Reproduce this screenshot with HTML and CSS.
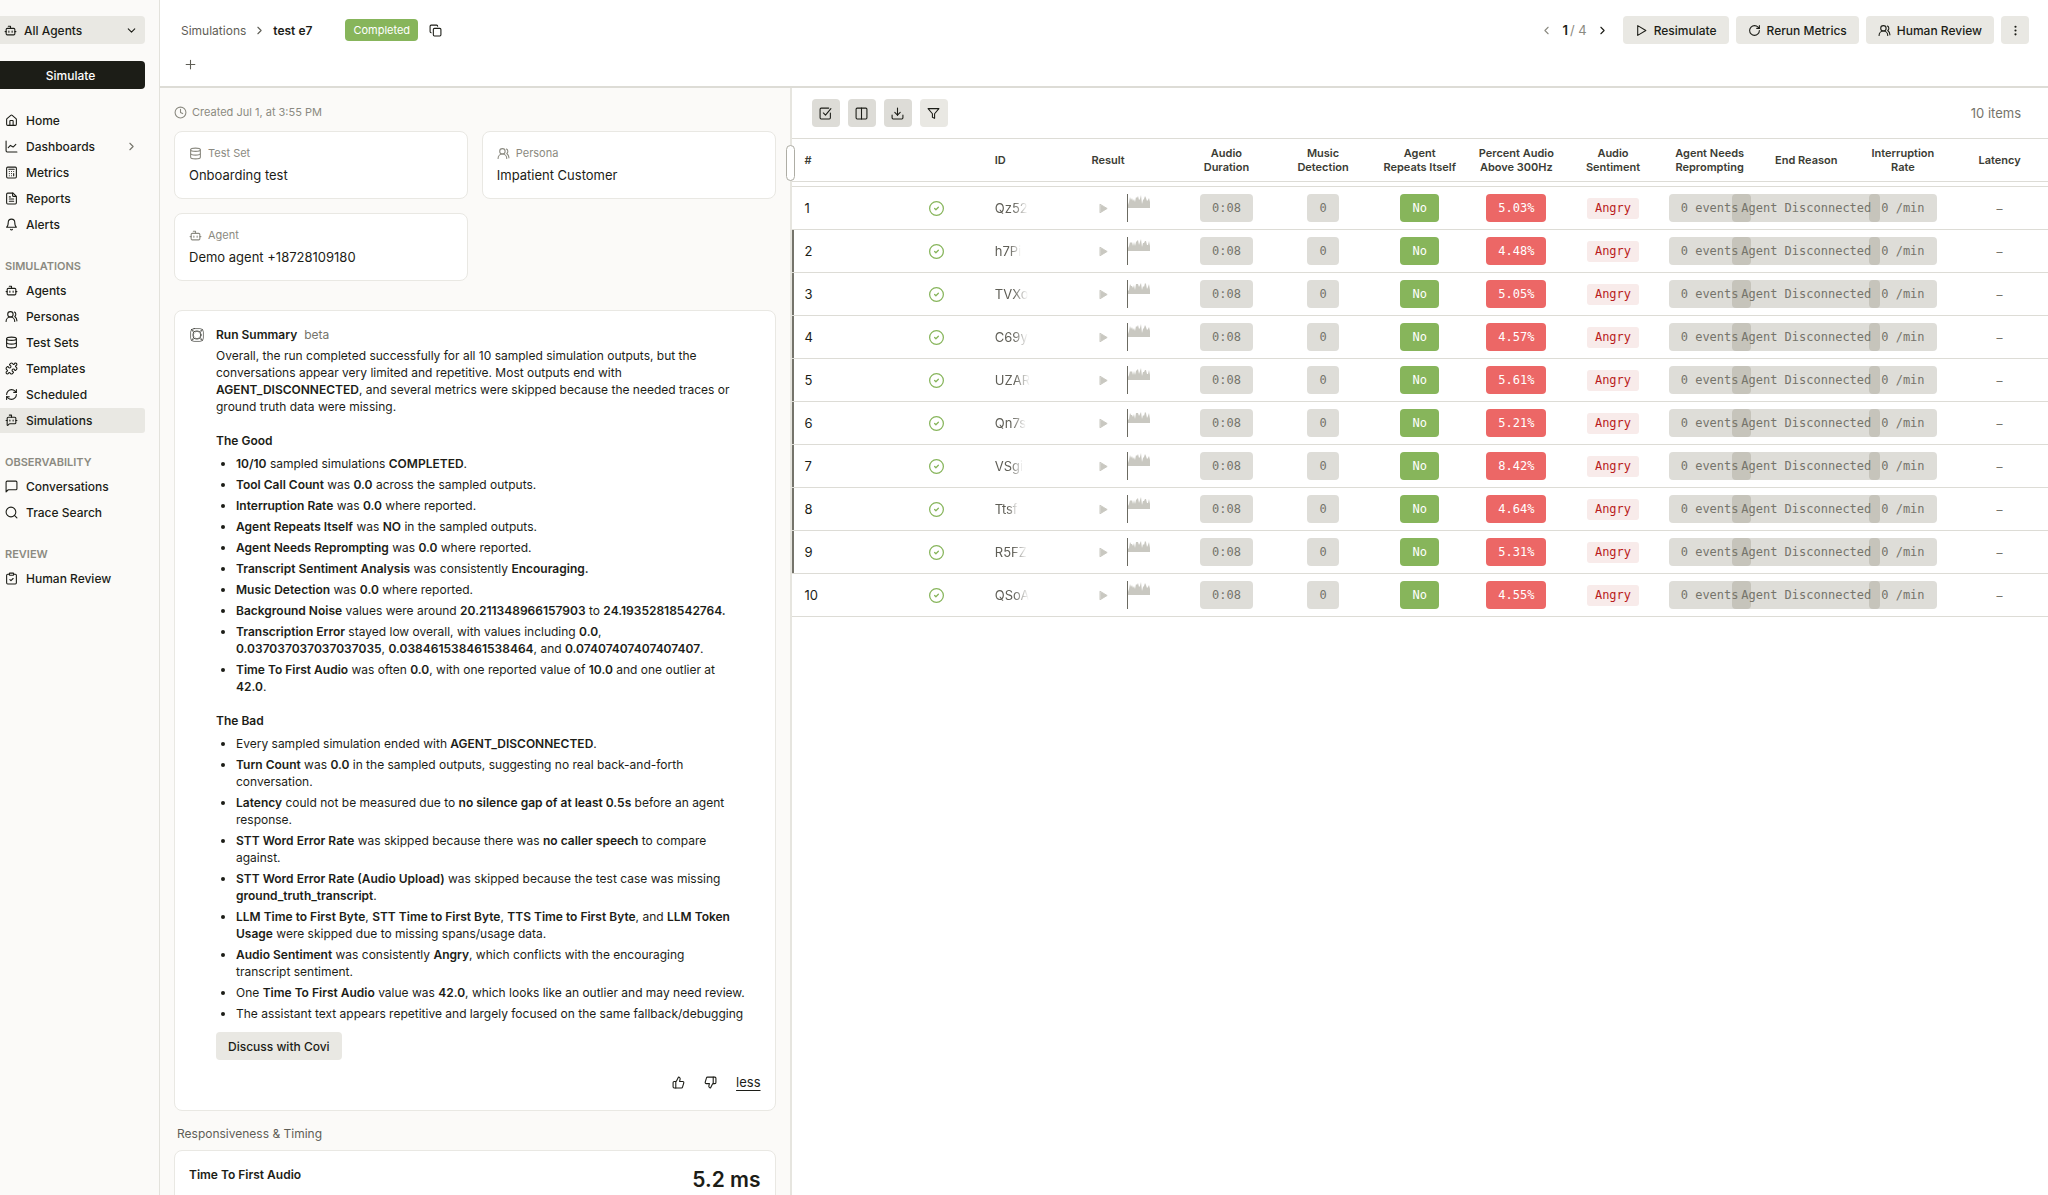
FILE: index.html
```html
<!DOCTYPE html>
<html lang="en">
<head>
    <meta charset="UTF-8">
    <meta name="viewport" content="width=device-width, initial-scale=1.0">
    <title>test e7 - Simulations</title>
    <link rel="stylesheet" href="styles.css">
</head>
<body>

<!-- Icon sprite -->
<svg class="sprite" aria-hidden="true">
    <symbol id="i-bot" viewBox="0 0 24 24"><path d="M12 8V4H8"/><rect width="16" height="12" x="4" y="8" rx="2"/><path d="M2 14h2M20 14h2M15 13v2M9 13v2"/></symbol>
    <symbol id="i-down" viewBox="0 0 24 24"><path d="m6 9 6 6 6-6"/></symbol>
    <symbol id="i-right" viewBox="0 0 24 24"><path d="m9 18 6-6-6-6"/></symbol>
    <symbol id="i-left" viewBox="0 0 24 24"><path d="m15 18-6-6 6-6"/></symbol>
    <symbol id="i-home" viewBox="0 0 24 24"><path d="M15 21v-8a1 1 0 0 0-1-1h-4a1 1 0 0 0-1 1v8"/><path d="M3 10a2 2 0 0 1 .709-1.528l7-5.999a2 2 0 0 1 2.582 0l7 5.999A2 2 0 0 1 21 10v9a2 2 0 0 1-2 2H5a2 2 0 0 1-2-2z"/></symbol>
    <symbol id="i-chart" viewBox="0 0 24 24"><path d="M2 2v18a2 2 0 0 0 2 2h18"/><path d="M6 14l4-4 5 3 5-5"/></symbol>
    <symbol id="i-calc" viewBox="0 0 24 24"><rect width="18" height="20" x="3" y="2" rx="2"/><path d="M7 6h10M16 10h.01M12 10h.01M8 10h.01M12 14h.01M8 14h.01M16 14v4M12 18h.01M8 18h.01"/></symbol>
    <symbol id="i-file" viewBox="0 0 24 24"><path d="M15 2H5a2 2 0 0 0-2 2v16a2 2 0 0 0 2 2h14a2 2 0 0 0 2-2V8Z"/><path d="M14 2v5a1 1 0 0 0 1 1h5M10 9H8M16 13H8M16 17H8"/></symbol>
    <symbol id="i-bell" viewBox="0 0 24 24"><path d="M6 8a6 6 0 0 1 12 0c0 7 3 9 3 9H3s3-2 3-9"/><path d="M10.3 21a1.94 1.94 0 0 0 3.4 0"/></symbol>
    <symbol id="i-users" viewBox="0 0 24 24"><path d="M18 21a8 8 0 0 0-16 0"/><circle cx="10" cy="8" r="5"/><path d="M22 20c0-3.37-2-6.5-4-8a5 5 0 0 0-.45-8.3"/></symbol>
    <symbol id="i-db" viewBox="0 0 24 24"><ellipse cx="12" cy="5" rx="9" ry="3"/><path d="M3 5v14a9 3 0 0 0 18 0V5"/><path d="M3 12a9 3 0 0 0 18 0"/></symbol>
    <symbol id="i-puzzle" viewBox="0 0 24 24"><path d="M15.39 4.39a1 1 0 0 0 1.68-.474 2.5 2.5 0 1 1 3.014 3.015 1 1 0 0 0-.474 1.68l1.683 1.682a2.414 2.414 0 0 1 0 3.414L19.61 15.39a1 1 0 0 1-1.68-.474 2.5 2.5 0 1 0-3.014 3.015 1 1 0 0 1 .474 1.68l-1.683 1.682a2.414 2.414 0 0 1-3.414 0L8.61 19.61a1 1 0 0 0-1.68.474 2.5 2.5 0 1 1-3.014-3.015 1 1 0 0 0 .474-1.68l-1.683-1.682a2.414 2.414 0 0 1 0-3.414L4.39 8.61a1 1 0 0 1 1.68.474 2.5 2.5 0 1 0 3.014-3.015 1 1 0 0 1-.474-1.68l1.683-1.682a2.414 2.414 0 0 1 3.414 0z"/></symbol>
    <symbol id="i-refresh" viewBox="0 0 24 24"><path d="M3 12a9 9 0 0 1 9-9 9.75 9.75 0 0 1 6.74 2.74L21 8"/><path d="M21 3v5h-5M21 12a9 9 0 0 1-9 9 9.75 9.75 0 0 1-6.74-2.74L3 16"/><path d="M8 16H3v5"/></symbol>
    <symbol id="i-botmsg" viewBox="0 0 24 24"><path d="M12 6V2H8M15 11v2M2 12h2M20 12h2M9 11v2"/><path d="M20 16a2 2 0 0 1-2 2H8.828a2 2 0 0 0-1.414.586l-2.202 2.202A.71.71 0 0 1 4 20.286V8a2 2 0 0 1 2-2h12a2 2 0 0 1 2 2z"/></symbol>
    <symbol id="i-msg" viewBox="0 0 24 24"><path d="M22 16a2 2 0 0 1-2 2H6l-4 4V4a2 2 0 0 1 2-2h16a2 2 0 0 1 2 2z"/></symbol>
    <symbol id="i-search" viewBox="0 0 24 24"><circle cx="11" cy="11" r="9"/><path d="m22 22-4.6-4.6"/></symbol>
    <symbol id="i-clipboard" viewBox="0 0 24 24"><rect width="8" height="4" x="8" y="2" rx="1"/><path d="M16 4h3a2 2 0 0 1 2 2v14a2 2 0 0 1-2 2H5a2 2 0 0 1-2-2V6a2 2 0 0 1 2-2h3"/><path d="m9 14 2 2 4-4"/></symbol>
    <symbol id="i-copy" viewBox="0 0 24 24"><rect width="14" height="14" x="8" y="8" rx="2"/><path d="M4 16c-1.1 0-2-.9-2-2V4c0-1.1.9-2 2-2h10c1.1 0 2 .9 2 2"/></symbol>
    <symbol id="i-plus" viewBox="0 0 24 24"><path d="M4 12h16M12 4v16"/></symbol>
    <symbol id="i-clock" viewBox="0 0 24 24"><circle cx="12" cy="12" r="10"/><path d="M12 6v6l4 2"/></symbol>
    <symbol id="i-play" viewBox="0 0 24 24"><path d="M5 3l15 9-15 9z"/></symbol>
    <symbol id="i-rerun" viewBox="0 0 24 24"><path d="M21 12a9 9 0 1 1-9-9c2.52 0 4.93 1 6.74 2.74L21 8"/><path d="M21 3v5h-5"/></symbol>
    <symbol id="i-more" viewBox="0 0 24 24"><circle cx="12" cy="12" r="1"/><circle cx="12" cy="5" r="1"/><circle cx="12" cy="19" r="1"/></symbol>
    <symbol id="i-select" viewBox="0 0 24 24"><path d="M21 11v9a2 2 0 0 1-2 2H4a2 2 0 0 1-2-2V4a2 2 0 0 1 2-2h14"/><path d="m8 11 4 4L22 3"/></symbol>
    <symbol id="i-columns" viewBox="0 0 24 24"><rect width="20" height="20" x="2" y="2" rx="2"/><path d="M12 2v20"/></symbol>
    <symbol id="i-download" viewBox="0 0 24 24"><path d="M12 15V2M22 15v5a2 2 0 0 1-2 2H4a2 2 0 0 1-2-2v-5"/><path d="m7 10 5 5 5-5"/></symbol>
    <symbol id="i-filter" viewBox="0 0 24 24"><path d="M22 3H2l8 9.46V19l4 2v-8.54z"/></symbol>
    <symbol id="i-up" viewBox="0 0 24 24"><path d="M7 10v12"/><path d="M15 5.88 14 10h5.83a2 2 0 0 1 1.92 2.56l-2.33 8A2 2 0 0 1 17.5 22H4a2 2 0 0 1-2-2v-8a2 2 0 0 1 2-2h2.76a2 2 0 0 0 1.79-1.11L12 2a3.13 3.13 0 0 1 3 3.88Z"/></symbol>
    <symbol id="i-thumbdown" viewBox="0 0 24 24"><path d="M17 14V2"/><path d="M9 18.12 10 14H4.17a2 2 0 0 1-1.92-2.56l2.33-8A2 2 0 0 1 6.5 2H20a2 2 0 0 1 2 2v8a2 2 0 0 1-2 2h-2.76a2 2 0 0 0-1.79 1.11L12 22a3.13 3.13 0 0 1-3-3.88Z"/></symbol>
    <symbol id="i-covi" viewBox="0 0 24 24"><rect width="22" height="22" x="1" y="1" rx="6"/><circle cx="12" cy="12" r="7"/><path d="M3 3c5 3 6 5 9 2 3 3 4 1 9-2-3 5-5 6-2 9-3 3-1 4 2 9-5-3-6-5-9-2-3-3-4-1-9 2 3-5 5-6 2-9 3-3 1-4-2-9z"/></symbol>
    <symbol id="i-ok" viewBox="0 0 24 24"><circle cx="12" cy="12" r="11"/><path d="m9 12 2 2 4-4"/></symbol>
</svg>

<div class="app">
    <aside class="sidebar">
        <div class="agent-select">
            <svg class="icon"><use href="#i-bot"/></svg>
            <select aria-label="Agent">
                <option>All Agents</option>
            </select>
            <svg class="icon"><use href="#i-down"/></svg>
        </div>
        <button class="simulate-btn">Simulate</button>

        <nav>
            <a href="#"><svg class="icon"><use href="#i-home"/></svg>Home</a>
            <a href="#"><svg class="icon"><use href="#i-chart"/></svg>Dashboards<svg class="icon nav-arrow"><use href="#i-right"/></svg></a>
            <a href="#"><svg class="icon"><use href="#i-calc"/></svg>Metrics</a>
            <a href="#"><svg class="icon"><use href="#i-file"/></svg>Reports</a>
            <a href="#"><svg class="icon"><use href="#i-bell"/></svg>Alerts</a>

            <h2>SIMULATIONS</h2>
            <a href="#"><svg class="icon"><use href="#i-bot"/></svg>Agents</a>
            <a href="#"><svg class="icon"><use href="#i-users"/></svg>Personas</a>
            <a href="#"><svg class="icon"><use href="#i-db"/></svg>Test Sets</a>
            <a href="#"><svg class="icon"><use href="#i-puzzle"/></svg>Templates</a>
            <a href="#"><svg class="icon"><use href="#i-refresh"/></svg>Scheduled</a>
            <a href="#" class="active"><svg class="icon"><use href="#i-botmsg"/></svg>Simulations</a>

            <h2>OBSERVABILITY</h2>
            <a href="#"><svg class="icon"><use href="#i-msg"/></svg>Conversations</a>
            <a href="#"><svg class="icon"><use href="#i-search"/></svg>Trace Search</a>

            <h2>REVIEW</h2>
            <a href="#"><svg class="icon"><use href="#i-clipboard"/></svg>Human Review</a>
        </nav>
    </aside>

    <main class="main">
        <header class="topbar">
            <div class="topbar-row">
                <div class="crumbs">
                    <a href="#">Simulations</a>
                    <svg class="icon"><use href="#i-right"/></svg>
                    <h1>test e7</h1>
                </div>
                <span class="status">Completed</span>
                <button class="plain-btn" aria-label="Copy"><svg class="icon"><use href="#i-copy"/></svg></button>
                <div class="actions">
                    <div class="pager">
                        <button class="plain-btn muted" aria-label="Previous"><svg class="icon"><use href="#i-left"/></svg></button>
                        <span class="count"><b>1</b>/ 4</span>
                        <button class="plain-btn" aria-label="Next"><svg class="icon"><use href="#i-right"/></svg></button>
                    </div>
                    <button class="btn"><svg class="icon"><use href="#i-play"/></svg>Resimulate</button>
                    <button class="btn"><svg class="icon"><use href="#i-rerun"/></svg>Rerun Metrics</button>
                    <button class="btn"><svg class="icon"><use href="#i-users"/></svg>Human Review</button>
                    <button class="btn icon-btn" aria-label="More"><svg class="icon"><use href="#i-more"/></svg></button>
                </div>
            </div>
            <button class="plain-btn add-btn" aria-label="Add tag"><svg class="icon"><use href="#i-plus"/></svg></button>
        </header>

        <div class="panels">
            <section class="details">
                <p class="created"><svg class="icon"><use href="#i-clock"/></svg>Created Jul 1, at 3:55 PM</p>

                <div class="info-grid">
                    <div class="card info">
                        <span class="info-label"><svg class="icon"><use href="#i-db"/></svg>Test Set</span>
                        <span>Onboarding test</span>
                    </div>
                    <div class="card info">
                        <span class="info-label"><svg class="icon"><use href="#i-users"/></svg>Persona</span>
                        <span>Impatient Customer</span>
                    </div>
                    <div class="card info">
                        <span class="info-label"><svg class="icon"><use href="#i-bot"/></svg>Agent</span>
                        <span>Demo agent +18728109180</span>
                    </div>
                </div>

                <article class="card summary">
                    <svg class="icon covi"><use href="#i-covi"/></svg>
                    <div class="summary-body">
                        <h2>Run Summary <small>beta</small></h2>
                        <p>Overall, the run completed successfully for all 10 sampled simulation outputs, but the conversations appear very limited and repetitive. Most outputs end with <b>AGENT_DISCONNECTED</b>, and several metrics were skipped because the needed traces or ground truth data were missing.</p>

                        <h3>The Good</h3>
                        <ul>
                            <li><b>10/10</b> sampled simulations <b>COMPLETED</b>.</li>
                            <li><b>Tool Call Count</b> was <b>0.0</b> across the sampled outputs.</li>
                            <li><b>Interruption Rate</b> was <b>0.0</b> where reported.</li>
                            <li><b>Agent Repeats Itself</b> was <b>NO</b> in the sampled outputs.</li>
                            <li><b>Agent Needs Reprompting</b> was <b>0.0</b> where reported.</li>
                            <li><b>Transcript Sentiment Analysis</b> was consistently <b>Encouraging.</b></li>
                            <li><b>Music Detection</b> was <b>0.0</b> where reported.</li>
                            <li><b>Background Noise</b> values were around <b>20.211348966157903</b> to <b>24.19352818542764.</b></li>
                            <li><b>Transcription Error</b> stayed low overall, with values including <b>0.0</b>, <b>0.037037037037037035</b>, <b>0.038461538461538464</b>, and <b>0.07407407407407407</b>.</li>
                            <li><b>Time To First Audio</b> was often <b>0.0</b>, with one reported value of <b>10.0</b> and one outlier at <b>42.0</b>.</li>
                        </ul>

                        <h3>The Bad</h3>
                        <ul>
                            <li>Every sampled simulation ended with <b>AGENT_DISCONNECTED</b>.</li>
                            <li><b>Turn Count</b> was <b>0.0</b> in the sampled outputs, suggesting no real back-and-forth conversation.</li>
                            <li><b>Latency</b> could not be measured due to <b>no silence gap of at least 0.5s</b> before an agent response.</li>
                            <li><b>STT Word Error Rate</b> was skipped because there was <b>no caller speech</b> to compare against.</li>
                            <li><b>STT Word Error Rate (Audio Upload)</b> was skipped because the test case was missing <b>ground_truth_transcript</b>.</li>
                            <li><b>LLM Time to First Byte</b>, <b>STT Time to First Byte</b>, <b>TTS Time to First Byte</b>, and <b>LLM Token Usage</b> were skipped due to missing spans/usage data.</li>
                            <li><b>Audio Sentiment</b> was consistently <b>Angry</b>, which conflicts with the encouraging transcript&nbsp;sentiment.</li>
                            <li>One <b>Time To First Audio</b> value was <b>42.0</b>, which looks like an outlier and may need review.</li>
                            <li>The assistant text appears repetitive and largely focused on the same fallback/debugging</li>
                        </ul>

                        <button class="btn">Discuss with Covi</button>
                        <div class="feedback">
                            <button class="plain-btn" aria-label="Good summary"><svg class="icon"><use href="#i-up"/></svg></button>
                            <button class="plain-btn" aria-label="Bad summary"><svg class="icon"><use href="#i-thumbdown"/></svg></button>
                            <a href="#">less</a>
                        </div>
                    </div>
                </article>

                <h2 class="section-title">Responsiveness &amp; Timing</h2>
                <div class="card metric">
                    <h3>Time To First Audio</h3>
                    <span class="metric-value">5.2 ms</span>
                </div>
            </section>

            <section class="results">
                <div class="resize-handle"></div>
                <div class="toolbar">
                    <button class="btn icon-btn dark" aria-label="Select"><svg class="icon"><use href="#i-select"/></svg></button>
                    <button class="btn icon-btn dark" aria-label="Columns"><svg class="icon"><use href="#i-columns"/></svg></button>
                    <button class="btn icon-btn dark" aria-label="Download"><svg class="icon"><use href="#i-download"/></svg></button>
                    <button class="btn icon-btn" aria-label="Filter"><svg class="icon"><use href="#i-filter"/></svg></button>
                    <span class="item-count">10 items</span>
                </div>
                <table>
                    <thead>
                        <tr>
                            <th class="left num">#</th>
                            <th></th>
                            <th class="left">ID</th>
                            <th class="left">Result</th>
                            <th>Audio Duration</th>
                            <th>Music Detection</th>
                            <th>Agent Repeats&nbsp;Itself</th>
                            <th>Percent&nbsp;Audio Above&nbsp;300Hz</th>
                            <th>Audio Sentiment</th>
                            <th>Agent&nbsp;Needs Reprompting</th>
                            <th>End Reason</th>
                            <th>Interruption Rate</th>
                            <th>Latency</th>
                        </tr>
                    </thead>
                    <tbody id="rows"></tbody>
                </table>
            </section>
        </div>
    </main>
</div>

<script src="script.js"></script>
</body>
</html>
```

FILE: styles.css
```css
* {
    box-sizing: border-box;
}
body {
    margin: 0;
    font-family: Inter, "Liberation Sans", sans-serif;
    font-size: 12px;
    line-height: 17px;
    color: #1c1d17;
    background-color: #fff;
}
h1, h2, h3, p, ul {
    margin: 0;
    padding: 0;
}
a {
    color: inherit;
    text-decoration: none;
}
b {
    font-weight: 600;
}
button, select {
    font: inherit;
    color: inherit;
    border: none;
    cursor: pointer;
}
.sprite {
    display: none;
}
.icon {
    width: 13px;
    height: 13px;
    flex: none;
    fill: none;
    stroke: currentColor;
    stroke-width: 2;
    stroke-linecap: round;
    stroke-linejoin: round;
}

.app {
    display: flex;
    height: 100vh;
    overflow: hidden;
}

/* Sidebar */
.sidebar {
    flex: 0 0 160px;
    padding: 16px 14px 0 0;
    background-color: #fbfaf8;
    border-right: 1px solid #e3e2dc;
    font-weight: 500;
}
.agent-select {
    display: flex;
    align-items: center;
    height: 28px;
    padding: 0 7px 0 4px;
    background-color: #e9e8e3;
    border-radius: 0 4px 4px 0;
}
.agent-select select {
    flex: 1;
    appearance: none;
    background: none;
    padding: 0 0 0 7px;
}
.simulate-btn {
    display: block;
    width: 100%;
    height: 28px;
    margin-top: 17px;
    padding: 0 4px 0 0;
    background-color: #1c1d17;
    color: #fff;
    font-weight: 500;
    border-radius: 0 4px 4px 0;
}
nav {
    display: flex;
    flex-direction: column;
    gap: 1px;
    margin-top: 19px;
}
nav a {
    display: flex;
    align-items: center;
    gap: 8px;
    height: 25px;
    padding: 0 7px 0 5px;
    border-radius: 0 3px 3px 0;
}
nav a.active {
    background-color: #e9e8e3;
}
nav h2 {
    margin: 20px 0 3px;
    padding-left: 5px;
    font-size: 11px;
    line-height: 16px;
    font-weight: 600;
    color: #8b8a81;
}
.nav-arrow {
    margin-left: auto;
    color: #75746b;
}

/* Top bar */
.main {
    flex: 1;
    min-width: 0;
    display: flex;
    flex-direction: column;
}
.topbar {
    height: 88px;
    padding: 16px 19px 0 21px;
    border-bottom: 2px solid #dddcd6;
}
.topbar-row {
    display: flex;
    align-items: center;
    height: 28px;
}
.crumbs {
    display: flex;
    align-items: center;
    gap: 7px;
    color: #5f5e56;
}
.crumbs h1 {
    font-size: 12px;
    font-weight: 600;
    color: #1c1d17;
}
.status {
    margin: 0 11px 0 33px;
    padding: 0 8px;
    font-size: 11px;
    line-height: 22px;
    color: #fff;
    background-color: #87b55b;
    border-radius: 4px;
}
.plain-btn {
    display: flex;
    padding: 0;
    background: none;
}
.muted {
    color: #8b8a81;
}
.add-btn {
    margin: 14px 0 0 3px;
    color: #5f5e56;
}
.actions {
    display: flex;
    gap: 7px;
    margin-left: auto;
}
.pager {
    display: flex;
    align-items: center;
    gap: 9px;
    margin-right: 7px;
}
.count {
    font-size: 13px;
    color: #8b8a81;
}
.count b {
    margin-right: 2px;
    color: #1c1d17;
}
.btn {
    display: inline-flex;
    align-items: center;
    justify-content: center;
    gap: 6px;
    height: 28px;
    padding: 0 12px;
    font-weight: 500;
    background-color: #e9e8e3;
    border-radius: 4px;
}
.icon-btn {
    width: 28px;
    padding: 0;
}
.dark {
    background-color: #dddcd7;
}

/* Panels */
.panels {
    flex: 1;
    min-height: 0;
    display: flex;
}
.details {
    flex: 0 0 33.45%;
    padding: 16px 14px 0 14px;
    overflow: hidden;
    background-color: #fbfaf8;
    border-right: 2px solid #e6e5df;
}
.created {
    display: flex;
    align-items: center;
    gap: 5px;
    padding-bottom: 2px;
    font-size: 11px;
    color: #8b8a81;
}
.card {
    background-color: #fff;
    border: 1px solid #e9e8e3;
    border-radius: 8px;
}
.info-grid {
    display: grid;
    grid-template-columns: 1fr 1fr;
    gap: 14px;
    margin: 8px 0 29px;
}
.info {
    display: flex;
    flex-direction: column;
    gap: 5px;
    height: 68px;
    padding: 13px 14px;
    font-size: 13px;
}
.info-label {
    display: flex;
    align-items: center;
    gap: 6px;
    font-size: 11px;
    color: #8b8a81;
}
.summary {
    display: flex;
    gap: 12px;
    padding: 15px 14px 19px 15px;
}
.covi {
    width: 14px;
    height: 14px;
    margin-top: 2px;
    stroke-width: 1;
}
.summary-body {
    flex: 1;
    min-width: 0;
}
.summary h2 {
    margin-bottom: 4px;
    font-size: 12px;
    font-weight: 600;
}
.summary small {
    margin-left: 4px;
    font-size: 12px;
    font-weight: 400;
    color: #75746b;
}
.summary h3 {
    margin: 17px 0 6px;
    font-size: 12px;
    font-weight: 600;
}
.summary ul {
    padding: 0 14px 0 20px;
}
.summary li {
    margin-bottom: 4px;
}
.summary .btn {
    margin-top: 6px;
}
.feedback {
    display: flex;
    justify-content: flex-end;
    align-items: center;
    gap: 19px;
    margin-top: 14px;
}
.feedback a {
    font-size: 13px;
    text-decoration: underline;
    text-underline-offset: 3px;
}
.section-title {
    margin: 14px 0 8px 3px;
    font-size: 12px;
    font-weight: 400;
    color: #5f5e56;
}
.metric {
    display: flex;
    justify-content: space-between;
    height: 120px;
    padding: 15px 14px;
}
.metric h3 {
    font-size: 12px;
    font-weight: 600;
}
.metric-value {
    font-size: 21px;
    line-height: 28px;
    font-weight: 600;
}

/* Results table */
.results {
    flex: 1;
    min-width: 0;
    position: relative;
}
.resize-handle {
    position: absolute;
    left: -6px;
    top: 57px;
    width: 9px;
    height: 36px;
    background-color: #fff;
    border: 1px solid #aeada5;
    border-radius: 5px;
}
.toolbar {
    display: flex;
    align-items: center;
    gap: 8px;
    height: 50px;
    padding: 0 27px 0 20px;
}
.item-count {
    margin-left: auto;
    font-size: 13px;
    color: #75746b;
}
table {
    width: 100%;
    table-layout: fixed;
    border-collapse: collapse;
}
th {
    height: 43px;
    padding: 0 10px;
    font-size: 11px;
    line-height: 14px;
    font-weight: 600;
    color: #3b3c34;
    border-top: 1px solid #dddcd6;
    border-bottom: 1px solid #dddcd6;
}
/* thin gap between the header and the first row */
tbody::before {
    content: "";
    display: table-row;
    height: 5px;
}
td {
    height: 43px;
    padding: 0 10px;
    border-top: 1px solid #dddcd6;
    border-bottom: 1px solid #dddcd6;
}
.left {
    text-align: left;
}
.num {
    padding-left: 13px;
    font-size: 13px;
}
th.num {
    font-size: 11px;
}
tr.marked .num {
    box-shadow: inset 2px 0 #75746b;
}
.cell {
    display: flex;
    align-items: center;
    justify-content: center;
}
.ok {
    width: 15px;
    height: 15px;
    color: #87b55b;
}
.id {
    display: inline-block;
    font-size: 13px;
    color: #5f5e56;
    -webkit-mask-image: linear-gradient(to right, #000 55%, transparent);
    mask-image: linear-gradient(to right, #000 55%, transparent);
}
.audio {
    display: flex;
    align-items: center;
    gap: 18px;
    padding-left: 7px;
}
.audio .icon {
    width: 11px;
    height: 11px;
    color: #c9c8c1;
    fill: currentColor;
}
.wave {
    width: 24px;
    height: 28px;
    fill: #c9c8c1;
}
.wave rect {
    fill: #6b6a61;
}
.badge {
    flex: none;
    padding: 0 12px;
    font-family: "DejaVu Sans Mono", monospace;
    line-height: 28px;
    white-space: nowrap;
    color: #75746b;
    background-color: rgba(134, 131, 112, 0.27);
    border-radius: 4px;
}
.badge.reason {
    padding: 0 9px;
}
.badge.good {
    color: #fff;
    background-color: #87b55b;
}
.badge.bad {
    color: #fff;
    background-color: #ec6766;
}
.badge.angry {
    padding: 0 8px;
    line-height: 21px;
    color: #b91c1c;
    background-color: #f8ebea;
    border-radius: 3px;
}
.dash {
    color: #75746b;
}
```

FILE: script.js
```js
const runs = [
    { id: 'Qz52', pct: '5.03%' },
    { id: 'h7Pi', pct: '4.48%' },
    { id: 'TVXo', pct: '5.05%' },
    { id: 'C69y', pct: '4.57%' },
    { id: 'UZAR', pct: '5.61%' },
    { id: 'Qn7s', pct: '5.21%' },
    { id: 'VSgi', pct: '8.42%' },
    { id: 'Ttsf', pct: '4.64%' },
    { id: 'R5FZ', pct: '5.31%' },
    { id: 'QSoA', pct: '4.55%' }
];

// peak heights of the audio preview, one per pixel column
const peaks = [3, 6, 11, 8, 10, 7, 9, 6, 11, 10, 12, 8, 9, 13, 4, 8, 9, 12, 10, 7, 8, 10, 6];

function wavePath(shift) {
    let d = 'M1 14';
    peaks.forEach((p, i) => {
        const h = i === 0 ? p : Math.max(4, p - (i * shift) % 3);
        d += `L${i + 1} ${14 - h}`;
    });
    return d + 'V14Z';
}

document.getElementById('rows').innerHTML = runs.map((run, i) => `
    <tr class="${i > 0 && i < 9 ? 'marked' : ''}">
        <td class="num">${i + 1}</td>
        <td><div class="cell"><svg class="icon ok"><use href="#i-ok"/></svg></div></td>
        <td><span class="id">${run.id}</span></td>
        <td>
            <div class="audio">
                <svg class="icon"><use href="#i-play"/></svg>
                <svg class="wave" viewBox="0 0 24 28"><path d="${wavePath(i)}"/><rect width="1" height="28"/></svg>
            </div>
        </td>
        <td><div class="cell"><span class="badge">0:08</span></div></td>
        <td><div class="cell"><span class="badge">0</span></div></td>
        <td><div class="cell"><span class="badge good">No</span></div></td>
        <td><div class="cell"><span class="badge bad">${run.pct}</span></div></td>
        <td><div class="cell"><span class="badge angry">Angry</span></div></td>
        <td><div class="cell"><span class="badge">0 events</span></div></td>
        <td><div class="cell"><span class="badge reason">Agent Disconnected</span></div></td>
        <td><div class="cell"><span class="badge">0 /min</span></div></td>
        <td><div class="cell dash">–</div></td>
    </tr>`).join('');
```
